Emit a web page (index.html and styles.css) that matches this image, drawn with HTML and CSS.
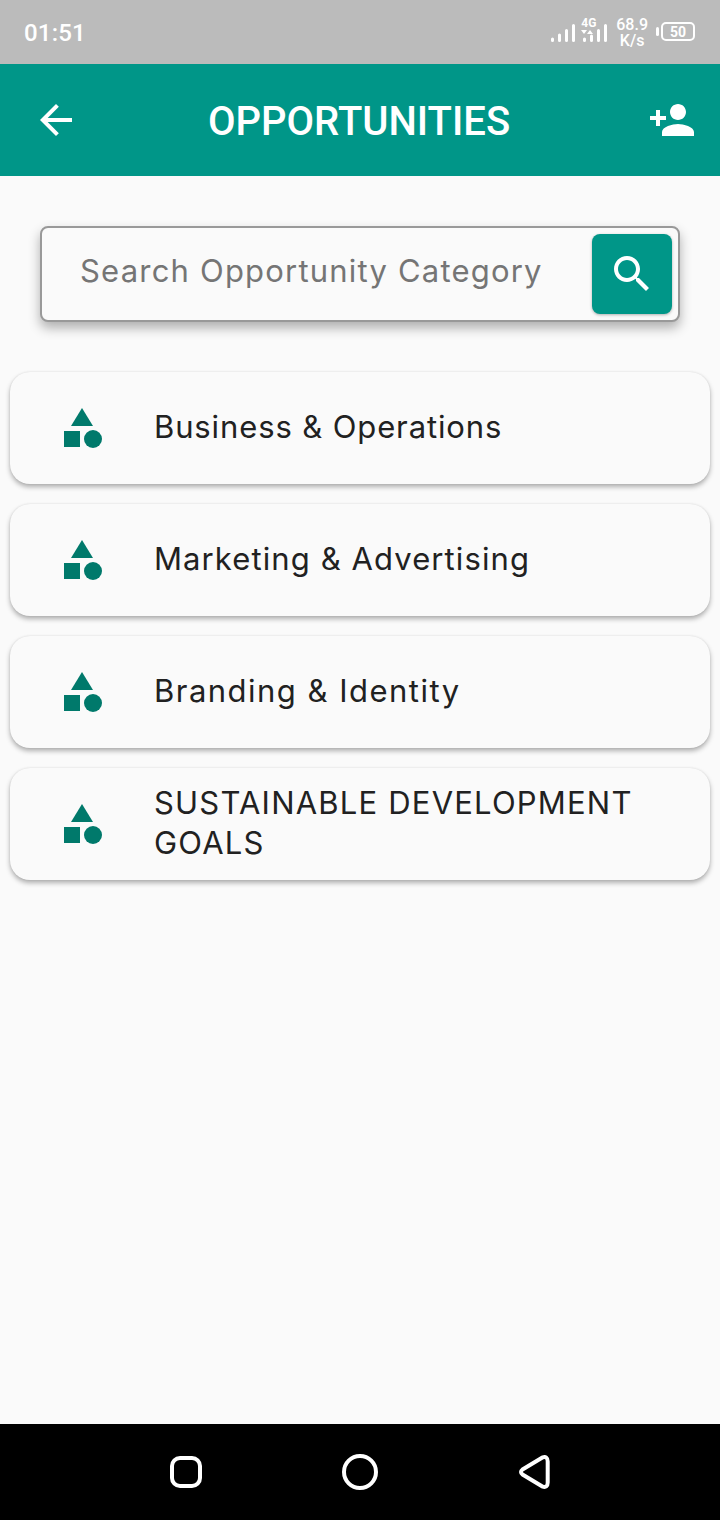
FILE: index.html
```
<!DOCTYPE html>
<html lang="en">
<head>
  <meta charset="UTF-8">
  <meta name="viewport" content="width=device-width, initial-scale=1.0">
  <title>Opportunities</title>
  <link rel="stylesheet" href="styles.css">
</head>
<body>
  <svg class="sprite" aria-hidden="true">
    <symbol id="category" viewBox="0 0 24 24">
      <path d="M12 2l-5.5 9h11z"/>
      <circle cx="17.5" cy="17.5" r="4.5"/>
      <path d="M3 13.5h8v8H3z"/>
    </symbol>
  </svg>

  <div class="status-bar">
    <span class="clock">01:51</span>
    <div class="status-icons">
      <svg class="signal" width="24" height="20" viewBox="0 0 24 20">
        <path d="M1.5 16v1.500M8.500 12v5.500M15.500 7.500v10M22.500 2.500v15"/>
      </svg>
      <div class="network">
        <span class="network-type">4G</span>
        <svg class="signal" width="26" height="20" viewBox="0 0 26 20">
          <path d="M3.500 16v1.500M10.500 13v4.500M17.500 7.500v10M24.500 2.500v15"/>
          <path class="arrows" d="M0 7h6l-3 4zM6 11l3-4 3 4z"/>
        </svg>
      </div>
      <div class="speed"><span>68.9</span><span>K/s</span></div>
      <div class="battery">50</div>
    </div>
  </div>

  <header class="app-bar">
    <svg class="icon" viewBox="0 0 24 24"><path d="M20 11H7.830l5.590-5.590L12 4l-8 8 8 8 1.410-1.410L7.830 13H20v-2z"/></svg>
    <h1>OPPORTUNITIES</h1>
    <svg class="icon" viewBox="0 0 24 24"><path d="M15 12c2.210 0 4-1.790 4-4s-1.790-4-4-4-4 1.790-4 4 1.790 4 4 4zm-9-2V7H4v3H1v2h3v3h2v-3h3v-2H6zm9 4c-2.670 0-8 1.340-8 4v2h16v-2c0-2.660-5.330-4-8-4z"/></svg>
  </header>

  <main>
    <form class="search">
      <input type="text" placeholder="Search Opportunity Category" aria-label="Search Opportunity Category">
      <button type="button" aria-label="Search">
        <svg class="icon" viewBox="0 0 24 24"><path d="M15.500 14h-.79l-.28-.27C15.410 12.590 16 11.110 16 9.500 16 5.910 13.090 3 9.500 3S3 5.910 3 9.500 5.910 16 9.500 16c1.610 0 3.090-.59 4.230-1.570l.27.28v.79l5 4.990L20.490 19l-4.990-5zm-6 0C7.010 14 5 11.990 5 9.500S7.010 5 9.500 5 14 7.010 14 9.500 11.990 14 9.500 14z"/></svg>
      </button>
    </form>

    <ul class="categories">
      <li class="card">
        <svg class="icon"><use href="#category"/></svg>
        <span class="business">Business &amp; Operations</span>
      </li>
      <li class="card">
        <svg class="icon"><use href="#category"/></svg>
        <span class="marketing">Marketing &amp; Advertising</span>
      </li>
      <li class="card">
        <svg class="icon"><use href="#category"/></svg>
        <span class="branding">Branding &amp; Identity</span>
      </li>
      <li class="card">
        <svg class="icon"><use href="#category"/></svg>
        <span class="goals">SUSTAINABLE DEVELOPMENT GOALS</span>
      </li>
    </ul>
  </main>

  <nav class="nav-bar">
    <svg width="40" height="40" viewBox="0 0 40 40"><rect x="6" y="6" width="28" height="28" rx="8"/></svg>
    <svg width="40" height="40" viewBox="0 0 40 40"><circle cx="20" cy="20" r="16"/></svg>
    <svg width="40" height="40" viewBox="0 0 40 40"><path d="M8.500 17.500L28 5.700Q33.700 3.500 33.700 9.500V30.500Q33.700 36.500 28 34.300L8.500 22.500Q5.500 20 8.500 17.500z"/></svg>
  </nav>
</body>
</html>
```
FILE: styles.css
```
* {
  margin: 0;
  padding: 0;
  box-sizing: border-box;
}

body {
  background: #fafafa;
  color: #212121;
  font-family: 'Inter', sans-serif;
  min-height: 100vh;
  display: flex;
  flex-direction: column;
}

.sprite {
  display: none;
}

.icon {
  width: 48px;
  height: 48px;
  flex: none;
  display: block;
  fill: currentColor;
}

/* status bar */
.status-bar {
  height: 64px;
  padding: 0 25px 0 24px;
  display: flex;
  justify-content: space-between;
  align-items: center;
  background: #bbb;
  color: #fff;
  font-family: 'Roboto', sans-serif;
  font-weight: 500;
}

.clock {
  padding-top: 2px;
  font-size: 24px;
  letter-spacing: 0.2px;
}

.status-icons {
  display: flex;
  align-items: center;
}

.signal {
  display: block;
  fill: none;
  stroke: #fff;
  stroke-width: 3;
  stroke-linecap: round;
}

.status-icons > .signal {
  margin-top: 2px;
}

.signal .arrows {
  fill: #fff;
  stroke: none;
}

.network {
  position: relative;
  margin: 2px 9px 0 6px;
}

.network-type {
  position: absolute;
  top: -6px;
  left: 0;
  font-size: 12px;
  line-height: 12px;
  font-weight: 700;
}

.speed {
  display: flex;
  flex-direction: column;
  align-items: center;
  font-size: 16px;
  line-height: 16px;
  padding-top: 2px;
  margin-right: 8px;
}

.battery {
  position: relative;
  width: 34px;
  height: 19px;
  margin-left: 5px;
  margin-top: -1px;
  border: 2px solid #fff;
  border-radius: 5px;
  font-size: 14px;
  font-weight: 700;
  line-height: 16px;
  text-align: center;
}

.battery::before {
  content: '';
  position: absolute;
  left: -7px;
  top: 3px;
  width: 3px;
  height: 9px;
  border-radius: 2px;
  background: #fff;
}

/* app bar */
.app-bar {
  height: 112px;
  padding: 0 24px 0 32px;
  display: flex;
  justify-content: space-between;
  align-items: center;
  background: #009688;
  color: #fff;
}

h1 {
  font-family: 'Roboto', sans-serif;
  font-size: 40px;
  font-weight: 500;
  padding: 2px 10px 0 0;
}

/* search */
main {
  flex: 1;
  padding: 50px 10px 0;
}

.search {
  height: 96px;
  margin: 0 30px 50px;
  padding: 0 6px 0 38px;
  display: flex;
  align-items: center;
  background: #fafafa;
  border: 2px solid #999;
  border-radius: 8px;
  box-shadow: 0 6px 12px rgba(0, 0, 0, 0.3);
}

.search input {
  flex: 1;
  min-width: 0;
  height: 80px;
  padding-bottom: 7px;
  border: none;
  outline: none;
  background: none;
  font-family: 'Inter', sans-serif;
  font-size: 31px;
  letter-spacing: 1.2px;
}

.search input::placeholder {
  color: #757575;
}

.search button {
  width: 80px;
  height: 80px;
  display: flex;
  justify-content: center;
  align-items: center;
  border: none;
  border-radius: 8px;
  background: #009688;
  color: #fff;
  box-shadow: 0 1px 3px rgba(0, 0, 0, 0.3);
}

/* category list */
.categories {
  list-style: none;
  display: flex;
  flex-direction: column;
  gap: 20px;
}

.card {
  height: 112px;
  padding: 0 48px;
  display: flex;
  align-items: center;
  gap: 48px;
  border-radius: 20px;
  background: #fafafa;
  box-shadow: 0 3px 5px rgba(0, 0, 0, 0.3), 0 0 2px rgba(0, 0, 0, 0.1);
  font-size: 31px;
  line-height: 40px;
}

.card .icon {
  color: #00796b;
}

.card span {
  padding-bottom: 2px;
}

.business {
  letter-spacing: 0.88px;
}

.marketing {
  letter-spacing: 1.1px;
}

.branding {
  letter-spacing: 1.48px;
}

.goals {
  letter-spacing: 1.2px;
}

/* system navigation */
.nav-bar {
  height: 96px;
  padding: 0 166px;
  display: flex;
  justify-content: space-between;
  align-items: center;
  background: #000;
}

.nav-bar svg {
  fill: none;
  stroke: #fff;
  stroke-width: 4;
  stroke-linejoin: round;
}
```
